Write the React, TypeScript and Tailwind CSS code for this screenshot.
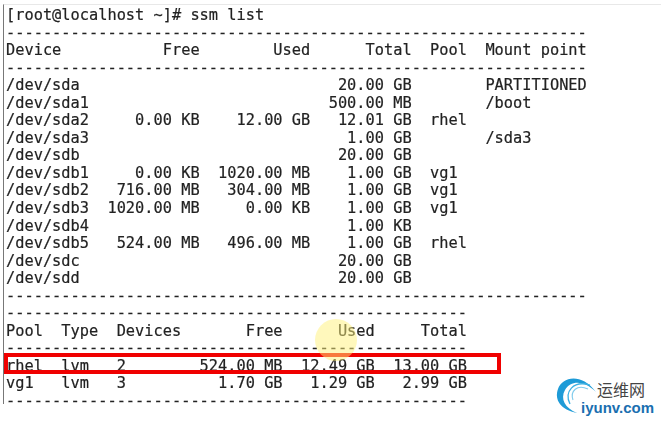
const row = (a: string, b = '', c = '', d = '', e = '', f = '') =>
  `${a.padEnd(11)}${b.padStart(10)}${c.padStart(12)}${d.padStart(11)}  ${e.padEnd(4)}  ${f}`.trimEnd();

const poolRow = (a: string, b: string, c: string, d: string, e: string, f: string) =>
  `${a.padEnd(6)}${b.padEnd(6)}${c.padEnd(7)}${d.padStart(11)}${e.padStart(10)}${f.padStart(10)}`;

const lines = [
  '[root@localhost ~]# ssm list',
  '-'.repeat(63),
  row('Device', 'Free', 'Used', 'Total', 'Pool', 'Mount point'),
  '-'.repeat(63),
  row('/dev/sda', '', '', '20.00 GB', '', 'PARTITIONED'),
  row('/dev/sda1', '', '', '500.00 MB', '', '/boot'),
  row('/dev/sda2', '0.00 KB', '12.00 GB', '12.01 GB', 'rhel'),
  row('/dev/sda3', '', '', '1.00 GB', '', '/sda3'),
  row('/dev/sdb', '', '', '20.00 GB'),
  row('/dev/sdb1', '0.00 KB', '1020.00 MB', '1.00 GB', 'vg1'),
  row('/dev/sdb2', '716.00 MB', '304.00 MB', '1.00 GB', 'vg1'),
  row('/dev/sdb3', '1020.00 MB', '0.00 KB', '1.00 GB', 'vg1'),
  row('/dev/sdb4', '', '', '1.00 KB'),
  row('/dev/sdb5', '524.00 MB', '496.00 MB', '1.00 GB', 'rhel'),
  row('/dev/sdc', '', '', '20.00 GB'),
  row('/dev/sdd', '', '', '20.00 GB'),
  '-'.repeat(63),
  '-'.repeat(50),
  poolRow('Pool', 'Type', 'Devices', 'Free', 'Used', 'Total'),
  '-'.repeat(50),
  poolRow('rhel', 'lvm', '2', '524.00 MB', '12.49 GB', '13.00 GB'),
  poolRow('vg1', 'lvm', '3', '1.70 GB', '1.29 GB', '2.99 GB'),
  '-'.repeat(50),
];

function Logo() {
  return (
    <div className="absolute left-[550px] top-[370px] h-[50px] w-[108px]">
      <svg className="absolute left-0 top-0" width="60" height="50" viewBox="0 0 60 50" fill="none">
        <path d="M27 43C11 40 4 30 8 19C12 7 31 2 46 22C34 10 21 10 15 20C10 29 15 38 27 43Z" fill="#1e9bd7" />
        <path d="M20 34C14 22 23 10 40 15" stroke="#3db1e3" strokeWidth="1.3" />
        <path d="M23 30C20 21 27 14 38 19" stroke="#7fcbec" strokeWidth="1.1" />
      </svg>
      <span className="absolute left-[47px] top-[9px] whitespace-nowrap text-[16px] leading-[20px] text-[#444444] [font-family:'Noto_Sans_CJK_SC',sans-serif]">
        运维网
      </span>
      <span className="absolute left-[31px] top-[29px] whitespace-nowrap text-[15px] font-bold leading-[18px] text-[#1a6fb0] [font-family:'Liberation_Sans',sans-serif]">
        iyunv.com
      </span>
    </div>
  );
}

export default function App() {
  return (
    <div className="relative h-[423px] w-[661px] overflow-hidden bg-white">
      <div className="ml-[3px] mt-[4px] h-[400px] border-l border-t border-l-[#777777] border-t-[#e8e8e8] pl-[2px] pt-[2px]">
        <pre className="text-[15.32px] leading-[17.55px] text-[#222222] blur-[0.3px] [-webkit-text-stroke:0.2px_#222222] [font-family:'DejaVu_Sans_Mono',monospace]">
          {lines.join('\n')}
        </pre>
      </div>
      {/* highlight over the rhel row */}
      <div className="absolute left-[4px] top-[353px] h-[21px] w-[497px] border-4 border-[#f00000]" />
      {/* cursor spot */}
      <div className="absolute left-[315px] top-[319px] h-[42px] w-[42px] rounded-full bg-[#fff27a]/50" />
      <Logo />
    </div>
  );
}
